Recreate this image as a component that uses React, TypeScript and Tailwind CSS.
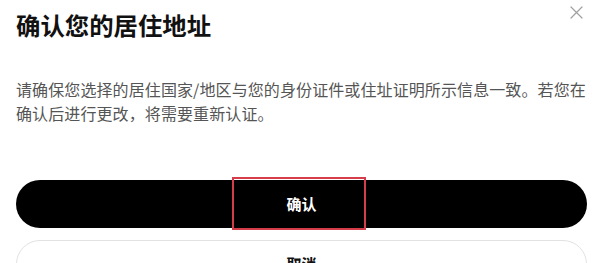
import React from "react";

export default function App() {
  return (
    <div
      className="relative w-[604px] h-[263px] overflow-hidden bg-white px-4"
      style={{ fontFamily: '"Noto Sans CJK SC", "Noto Sans", sans-serif' }}
    >
      <button className="absolute right-[20px] top-[4px] w-[16px] h-[16px] flex items-center justify-center text-[#a0a0a0]">
        <svg width="13" height="13" viewBox="0 0 13 13" fill="none">
          <path d="M1 1L12 12M12 1L1 12" stroke="currentColor" strokeWidth="1.2" strokeLinecap="round" />
        </svg>
      </button>
      <h1 className="pt-[9px] text-[24.4px] leading-[32px] font-bold text-[#111]">确认您的居住地址</h1>
      <p className="mt-[36px] text-[16px] leading-[24px] text-[#555] tracking-[0.1px]">
        请确保您选择的居住国家/地区与您的身份证件或住址证明所示信息一致。若您在确认后进行更改，将需要重新认证。
      </p>
      <div className="mt-[55px] flex flex-col gap-[12px] w-[571px]">
        <div className="relative">
          <button className="w-full h-[48px] rounded-full bg-black text-white text-[15px] font-semibold">确认</button>
          <div className="absolute left-[216px] top-[-3px] w-[134px] h-[53px] border-[2.5px] border-[#d63d4a] pointer-events-none" />
        </div>
        <button className="w-full h-[48px] rounded-full bg-white border border-[#e2e2e2] text-[#111] text-[15px] font-semibold">取消</button>
      </div>
    </div>
  );
}
